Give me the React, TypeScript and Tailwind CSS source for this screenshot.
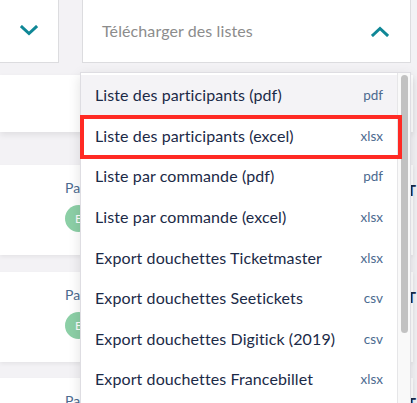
import React from "react";

const items: { label: string; ext: string }[] = [
  { label: "Liste des participants (pdf)", ext: "pdf" },
  { label: "Liste des participants (excel)", ext: "xlsx" },
  { label: "Liste par commande (pdf)", ext: "pdf" },
  { label: "Liste par commande (excel)", ext: "xlsx" },
  { label: "Export douchettes Ticketmaster", ext: "xlsx" },
  { label: "Export douchettes Seetickets", ext: "csv" },
  { label: "Export douchettes Digitick (2019)", ext: "csv" },
  { label: "Export douchettes Francebillet", ext: "xlsx" },
];

function Chevron({ up }: { up?: boolean }) {
  return (
    <svg width="18" height="11" viewBox="0 0 18 11" fill="none">
      <path
        d={up ? "M2 9 L9 2.5 L16 9" : "M2 2 L9 8.5 L16 2"}
        stroke="#0f8796"
        strokeWidth="3"
        strokeLinecap="square"
      />
    </svg>
  );
}

function OrderCard({ h }: { h: string }) {
  return (
    <div className={`bg-white ${h} flex shadow-[0_2px_4px_rgba(0,0,0,0.06)]`}>
      <div className="w-[65px]" />
      <div className="flex flex-col pt-[14px]">
        <span className="text-[14px] text-[#4b6a8f] leading-[18px]">Participants</span>
        <div className="mt-[8px] w-[27px] h-[27px] rounded-full bg-[#8ccfa6] text-white text-[12px] flex items-center justify-center">
          E
        </div>
      </div>
      <div className="flex-1" />
      <div className="w-[6px] pt-[14px] text-[15px] font-bold text-[#1b2a47]">T</div>
    </div>
  );
}

export default function App() {
  return (
    <div
      className="relative w-[417px] h-[403px] overflow-hidden bg-[#f3f2f5]"
      style={{ fontFamily: "Lato, 'Noto Sans', sans-serif" }}
    >
      {/* filter bar */}
      <div className="flex h-[63px] pr-[6px]">
        <div className="w-[59px] bg-white border-r border-b border-[#dcdcdf] flex items-center justify-center pb-[2px]">
          <Chevron />
        </div>
        <div className="w-[23px]" />
        <div className="flex-1 bg-white border-x border-b border-[#dcdcdf] flex items-center justify-between pl-[19px] pr-[21px]">
          <span className="text-[16px] text-[#8c8c8c] tracking-[0.1px]">Télécharger des listes</span>
          <Chevron up />
        </div>
      </div>

      {/* list behind */}
      <div className="mt-[12px] flex flex-col pr-[4px]">
        <div className="bg-white h-[57px] shadow-[0_3px_6px_rgba(0,0,0,0.08)]" />
        <div className="h-[33px]" />
        <OrderCard h="h-[90px]" />
        <div className="h-[17px]" />
        <OrderCard h="h-[90px]" />
        <div className="h-[16px]" />
        <OrderCard h="h-[90px]" />
      </div>

      {/* download menu */}
      <div className="absolute left-[80px] top-[72px] w-[331px] h-[340px] bg-white border border-[#dedde2] shadow-[0_4px_12px_rgba(0,0,0,0.12)] flex">
        <div className="flex-1 flex flex-col pt-[2px]">
          {items.map((it, i) => (
            <div
              key={it.label}
              className={`h-[40.6px] shrink-0 flex items-center justify-between pl-[14px] pr-[14px] ${
                i === 0 ? "bg-[#f4f3f6]" : "bg-white"
              }`}
            >
              <span className="text-[16px] text-[#1b2a47] tracking-[0.1px]">{it.label}</span>
              <span className="text-[13.5px] text-[#4b6a8f]">{it.ext}</span>
            </div>
          ))}
        </div>
        <div className="w-[13px] bg-[#f9f9f9] border-l border-[#e6e6e8] flex justify-center pt-[2px]">
          <div className="w-[7px] h-[258px] rounded-full bg-[#c2c2c2]" />
        </div>
        <div className="absolute left-[-1px] top-[42px] w-[322px] h-[44px] border-[4px] border-[#ff2a24]" />
      </div>
    </div>
  );
}
